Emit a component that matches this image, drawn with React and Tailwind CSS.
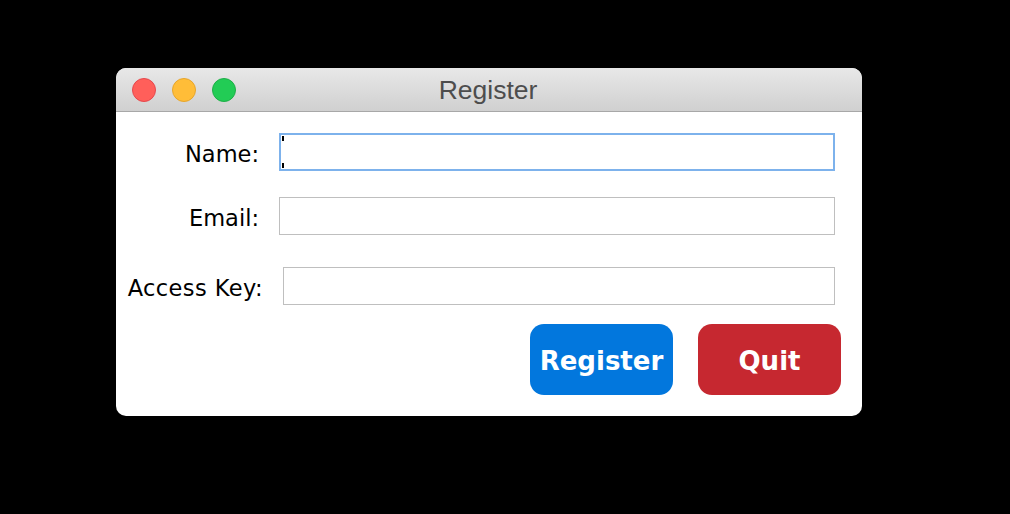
export default function App() {
  const label = "shrink-0 pt-1 text-right text-[22.5px] leading-none text-black font-['DejaVu_Sans',sans-serif]"
  const field = "h-[38px] flex-1 border border-[#bfbfbf] bg-white"
  const button = "flex h-[71px] w-[143px] items-center justify-center rounded-[14px] pt-1 text-[26px] font-bold text-white font-['DejaVu_Sans',sans-serif]"

  return (
    <div className="h-[514px] w-[1010px] bg-black pl-[116px] pt-[68px]">
      <div className="h-[348px] w-[746px] overflow-hidden rounded-[10px] bg-white">
        {/* Title bar */}
        <div className="relative flex h-[44px] items-center border-b border-[#a8a8a8] bg-gradient-to-b from-[#e8e8e8] to-[#d0d0d0] pl-4">
          <div className="flex gap-4">
            <span className="h-6 w-6 rounded-full border border-[#e5484d] bg-[#ff5f5a]" />
            <span className="h-6 w-6 rounded-full border border-[#e6a52c] bg-[#ffbd38]" />
            <span className="h-6 w-6 rounded-full border border-[#1fae48] bg-[#22cc55]" />
          </div>
          <div className="absolute inset-0 flex items-center justify-center pr-[2px] pt-[3px] text-[26.5px] text-[#4d4d4d] font-['Liberation_Sans',sans-serif]">
            Register
          </div>
        </div>

        {/* Form */}
        <div className="flex flex-col pt-[21px]">
          <div className="flex items-center pr-[27px]">
            <div className={label + " mr-5 w-[143px]"}>Name:</div>
            <div className="relative h-[38px] flex-1 border-2 border-[#7db2ec] bg-white">
              <span className="absolute left-[1px] top-[1px] h-[5px] w-[2px] bg-black" />
              <span className="absolute bottom-[1px] left-[1px] h-[5px] w-[2px] bg-black" />
            </div>
          </div>
          <div className="mt-[26px] flex items-center pr-[27px]">
            <div className={label + " mr-5 w-[143px]"}>Email:</div>
            <div className={field} />
          </div>
          <div className="mt-[32px] flex items-center pr-[27px]">
            <div className={label + " mr-5 w-[147px] tracking-[0.4px]"}>Access Key:</div>
            <div className={field} />
          </div>
          <div className="mt-[19px] flex justify-end gap-[25px] pr-[21px]">
            <button className={button + " bg-[#0277dd]"}>Register</button>
            <button className={button + " bg-[#c62830]"}>Quit</button>
          </div>
        </div>
      </div>
    </div>
  )
}
